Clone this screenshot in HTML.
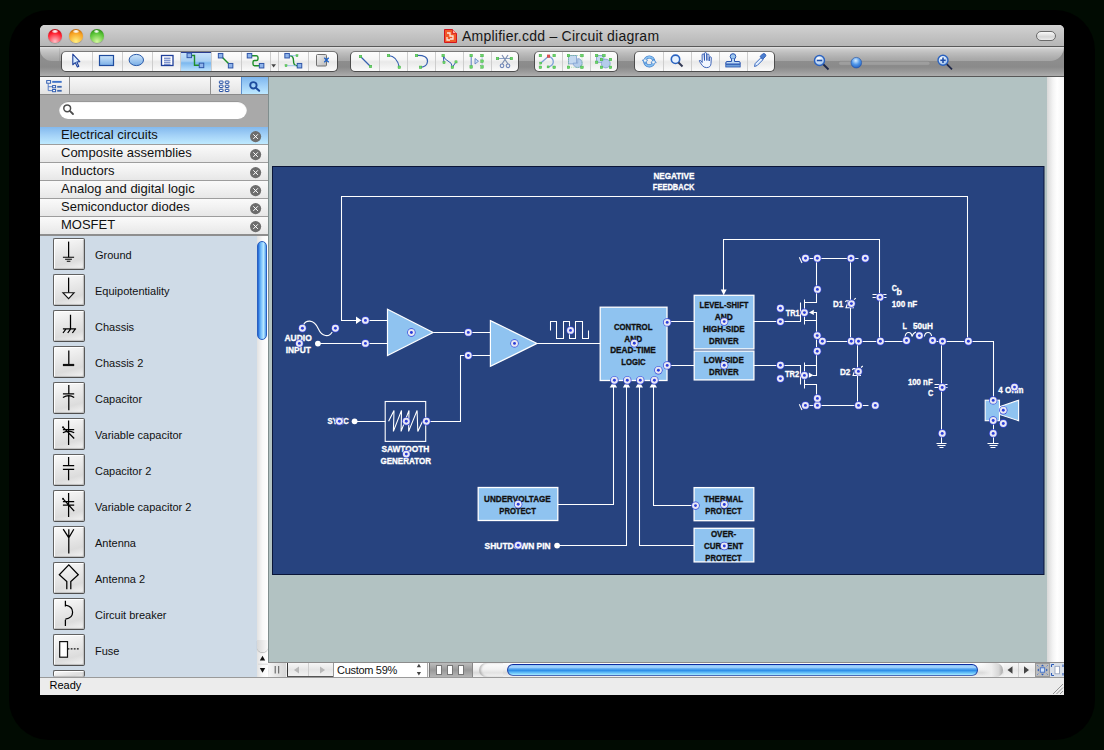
<!DOCTYPE html><html><head><meta charset="utf-8"><style>
*{box-sizing:border-box}
html,body{margin:0;padding:0}
body{width:1104px;height:750px;overflow:hidden;background:#010b02;position:relative;font-family:"Liberation Sans",sans-serif}
.a{position:absolute}
svg{position:absolute;overflow:visible}
#shadow{left:9px;top:10px;width:1086px;height:730px;background:#000;border-radius:40px}
#win{left:40px;top:25px;width:1024px;height:670px;background:#ececec;border-radius:5px 5px 0 0}
#title{left:40px;top:25px;width:1024px;height:22px;background:linear-gradient(#d2d2d2,#c6c6c6 40%,#b6b6b6);border-radius:5px 5px 0 0;border-bottom:1px solid #585858}
#tb{left:40px;top:47px;width:1024px;height:30px;background:linear-gradient(#8e8e8e 0px,#8d8d8d 14px,#8a8a8a 20px,#9c9c9c 25px,#adadad 29px);border-bottom:1px solid #575757}
.tl{width:14px;height:14px;border-radius:50%;top:29px}
.seg{top:51px;height:20.5px;border-radius:5px;background:linear-gradient(#fdfdfd 0,#f6f6f6 40%,#e9e9e9 52%,#f1f1f1 75%,#fbfbfb 100%);border:1px solid #4d4d4d;border-top-color:#7a7a7a}
.dv{top:52px;width:1px;height:18.5px;background:#cdcdcd}
#lp{left:40px;top:77px;width:228px;height:600px;background:#cfdbe7}
.row{left:40px;width:228px;height:18px;background:linear-gradient(#fafafa 0,#f2f2f2 45%,#e7e7e7 100%);border-bottom:1px solid #9d9d9d;font-size:13px;color:#111;padding-left:21px;line-height:16px;white-space:nowrap}
.row.sel{background:linear-gradient(#83b9ee 0,#a4d2f7 50%,#bfeaff 100%)}
.xb{width:11px;height:11px;border-radius:50%;background:#6c6c6c;left:250px}
#canvas{left:268px;top:77px;width:779px;height:585px;background:#b2c2c2;border-left:1px solid #7f8e8e}
#vsb{left:1047px;top:77px;width:17px;height:585px;background:linear-gradient(90deg,#d8d8d8,#f4f4f4 35%,#ffffff 60%,#f4f4f4)}
#status{left:40px;top:677px;width:1024px;height:18px;background:#ececec;border-top:1px solid #9a9a9a}
.item{left:53px;width:32px;height:32px;border:1px solid #616161;border-bottom:2px solid #4f4f4f;border-right-color:#575757;border-radius:2px;background:linear-gradient(165deg,#fbfbfb 0%,#e9e9e9 40%,#dcdcdc 72%,#f4f4f4 100%);box-shadow:inset 1px 1px 0 #fff, inset -1px -1px 1px #bdbdbd}
.lbl{left:95px;font-size:11px;color:#111;white-space:nowrap;line-height:12px}
</style></head><body>
<div id="shadow" class="a"></div>
<div id="win" class="a"></div>
<div id="title" class="a"></div>
<div class="a" style="left:48px;top:28.9px;width:14px;height:14px;border-radius:50%;background:radial-gradient(circle at 50% 88%,#ffc0c8 0,#ff1a2a 62%,#8a0a12 100%);box-shadow:0 0.5px 1px rgba(0,0,0,.3)"></div>
<div class="a" style="left:52.2px;top:29.7px;width:5.6px;height:3.4px;border-radius:50%;background:radial-gradient(ellipse at 50% 40%,rgba(255,255,255,1) 0,rgba(255,255,255,.7) 50%,rgba(255,255,255,0) 100%)"></div>
<div class="a" style="left:68.9px;top:28.9px;width:14px;height:14px;border-radius:50%;background:radial-gradient(circle at 50% 88%,#fff080 0,#f7a020 62%,#a04a00 100%);box-shadow:0 0.5px 1px rgba(0,0,0,.3)"></div>
<div class="a" style="left:73.10000000000001px;top:29.7px;width:5.6px;height:3.4px;border-radius:50%;background:radial-gradient(ellipse at 50% 40%,rgba(255,255,255,1) 0,rgba(255,255,255,.7) 50%,rgba(255,255,255,0) 100%)"></div>
<div class="a" style="left:89.7px;top:28.9px;width:14px;height:14px;border-radius:50%;background:radial-gradient(circle at 50% 88%,#d4f8a0 0,#52c030 62%,#1e6a10 100%);box-shadow:0 0.5px 1px rgba(0,0,0,.3)"></div>
<div class="a" style="left:93.9px;top:29.7px;width:5.6px;height:3.4px;border-radius:50%;background:radial-gradient(ellipse at 50% 40%,rgba(255,255,255,1) 0,rgba(255,255,255,.7) 50%,rgba(255,255,255,0) 100%)"></div>
<svg class="a" style="left:444px;top:29px" width="13" height="14" viewBox="0 0 13 14"><path d="M0.5 0.5H8.5L12.5 4.5V13.5H0.5Z" fill="#f05a28" stroke="#d4141e"/><path d="M8.5 0.5V4.5H12.5" fill="#ffb0a0" stroke="#d4141e" stroke-width="0.8"/><path d="M3 4H6V7H9V10H6M3 8V11H6" fill="none" stroke="#fff" stroke-width="1.3" opacity=".85"/></svg>
<div class="a" style="left:462px;top:28px;font-size:14px;letter-spacing:0.24px;color:#161616;white-space:nowrap;line-height:16px">Amplifier.cdd – Circuit diagram</div>
<div class="a" style="left:1036px;top:31px;width:20px;height:10px;border-radius:5px;border:1px solid #6a6a6a;background:linear-gradient(#fafafa,#d6d6d6 60%,#ececec)"></div>
<div id="tb" class="a"></div>
<div class="a" style="left:40px;top:47px;width:1024px;height:14px;border-radius:0 0 14px 12px;background:linear-gradient(#e4e4e4 0px,#cdcdcd 2px,#bdbdbd 6px,#adadad 11px,#a5a5a5 14px)"></div>
<div class="a" style="left:59.4px;top:48px;width:1px;height:13px;background:rgba(0,0,0,.08)"></div>
<div class="a seg" style="left:61px;width:277px"></div>
<div class="a dv" style="left:91.5px"></div>
<div class="a dv" style="left:121.5px"></div>
<div class="a dv" style="left:151.5px"></div>
<div class="a dv" style="left:180px"></div>
<div class="a dv" style="left:210.5px"></div>
<div class="a dv" style="left:240.5px"></div>
<div class="a dv" style="left:269.5px"></div>
<div class="a dv" style="left:277.5px"></div>
<div class="a dv" style="left:307.5px"></div>
<div class="a" style="left:180.5px;top:52px;width:30px;height:18.5px;background:linear-gradient(#c8e2fa 0,#a9d0f3 45%,#7cb8ee 55%,#bfe4ff 100%);border-top:1px solid #2a3c8f"></div>
<div class="a seg" style="left:350px;width:168.5px"></div>
<div class="a dv" style="left:378.5px"></div>
<div class="a dv" style="left:406.5px"></div>
<div class="a dv" style="left:434.5px"></div>
<div class="a dv" style="left:462.5px"></div>
<div class="a dv" style="left:490.5px"></div>
<div class="a seg" style="left:533.5px;width:84.5px"></div>
<div class="a dv" style="left:561.5px"></div>
<div class="a dv" style="left:589.5px"></div>
<div class="a seg" style="left:634px;width:140.5px"></div>
<div class="a dv" style="left:662.5px"></div>
<div class="a dv" style="left:690.5px"></div>
<div class="a dv" style="left:718.5px"></div>
<div class="a dv" style="left:746.5px"></div>
<svg class="a" style="left:0;top:0" width="1104" height="80" viewBox="0 0 1104 80"><path d="M72.8 54.2 L72.8 64.8 L75.2 62.6 L77.4 67 L78.8 66.2 L76.8 62 L79.8 61.6 Z" fill="#d8ecff" stroke="#1c3f9a" stroke-width="1.1" stroke-linejoin="round"/><defs><linearGradient id="gb" x1="0" y1="0" x2="0" y2="1"><stop offset="0" stop-color="#cfe6fb"/><stop offset="1" stop-color="#79aee6"/></linearGradient></defs><rect x="99.5" y="55.5" width="14" height="10" fill="url(#gb)" stroke="#1f4c9e" stroke-width="1.2"/><ellipse cx="136.3" cy="60" rx="7.2" ry="5.6" fill="url(#gb)" stroke="#2a5aa8" stroke-width="1"/><rect x="161.5" y="55.5" width="11.5" height="10" fill="#fff" stroke="#1f3f9a" stroke-width="1.3"/><rect x="164" y="57.7" width="6.5" height="1" fill="#4a68b8"/><rect x="164" y="59.7" width="6.5" height="1" fill="#4a68b8"/><rect x="164" y="61.7" width="6.5" height="1" fill="#4a68b8"/><rect x="164" y="63.7" width="6.5" height="1" fill="#4a68b8"/><path d="M191.5 55.5 H194.5 V65.3 H199" fill="none" stroke="#1f8f2a" stroke-width="1.4"/><rect x="187.05" y="53.15" width="4.5" height="4.5" fill="#8fb4ea" stroke="#2f56a8" stroke-width="1"/><rect x="199.25" y="63.150000000000006" width="4.5" height="4.5" fill="#8fb4ea" stroke="#2f56a8" stroke-width="1"/><line x1="221" y1="56" x2="230" y2="65" stroke="#1f8f2a" stroke-width="1.4"/><rect x="218.35" y="53.45" width="4.5" height="4.5" fill="#8fb4ea" stroke="#2f56a8" stroke-width="1"/><rect x="228.35" y="63.45" width="4.5" height="4.5" fill="#8fb4ea" stroke="#2f56a8" stroke-width="1"/><path d="M252 55.7 H256.5 Q258 55.7 258 57.5 V59 Q258 60.5 256.5 60.5 H254.5 Q253 60.5 253 62 V64 Q253 65.7 254.5 65.7 H259" fill="none" stroke="#1f8f2a" stroke-width="1.4"/><rect x="247.25" y="53.45" width="4.5" height="4.5" fill="#8fb4ea" stroke="#2f56a8" stroke-width="1"/><rect x="259.35" y="63.45" width="4.5" height="4.5" fill="#8fb4ea" stroke="#2f56a8" stroke-width="1"/><path d="M271.3 64.3 H276 L273.6 67.6 Z" fill="#444"/><path d="M290 55.7 Q293.5 55.7 293.5 60.7 Q293.5 65.7 297 65.7" fill="none" stroke="#1f8f2a" stroke-width="1.4"/><line x1="290" y1="55.7" x2="297" y2="55.7" stroke="#8ab4e8" stroke-width="0.8"/><line x1="287" y1="65.7" x2="296" y2="65.7" stroke="#8ab4e8" stroke-width="0.8"/><rect x="296.0" y="54.7" width="2" height="2" fill="#6ad66a" stroke="#3aa83a" stroke-width="0.4"/><rect x="285.0" y="64.7" width="2" height="2" fill="#6ad66a" stroke="#3aa83a" stroke-width="0.4"/><rect x="284.85" y="53.45" width="4.5" height="4.5" fill="#8fb4ea" stroke="#2f56a8" stroke-width="1"/><rect x="297.25" y="63.45" width="4.5" height="4.5" fill="#8fb4ea" stroke="#2f56a8" stroke-width="1"/><defs><linearGradient id="gg" x1="0" y1="0" x2="1" y2="1"><stop offset="0" stop-color="#f4f4f4"/><stop offset="1" stop-color="#b8b8b8"/></linearGradient></defs><rect x="316.5" y="54.5" width="10" height="11.5" rx="1" fill="url(#gg)" stroke="#707070" stroke-width="1"/><path d="M324.3 57.8 L328.7 62.2 M328.7 57.8 L324.3 62.2" stroke="#1a5fc8" stroke-width="1.3"/><line x1="360.5" y1="56.5" x2="370.5" y2="66.5" stroke="#3560b0" stroke-width="1.2"/><rect x="359.2" y="55.2" width="2.6" height="2.6" fill="#6ad66a" stroke="#3aa83a" stroke-width="0.4"/><rect x="369.2" y="65.2" width="2.6" height="2.6" fill="#6ad66a" stroke="#3aa83a" stroke-width="0.4"/><path d="M388.5 55.5 Q397 56 399.3 67.3" fill="none" stroke="#3560b0" stroke-width="1.2"/><rect x="387.2" y="54.2" width="2.6" height="2.6" fill="#6ad66a" stroke="#3aa83a" stroke-width="0.4"/><rect x="398.0" y="66.0" width="2.6" height="2.6" fill="#6ad66a" stroke="#3aa83a" stroke-width="0.4"/><path d="M416.5 55.5 Q428 55 427.5 61.5 Q427 67 420.5 67.3" fill="none" stroke="#3560b0" stroke-width="1.2"/><rect x="415.2" y="54.2" width="2.6" height="2.6" fill="#6ad66a" stroke="#3aa83a" stroke-width="0.4"/><rect x="419.2" y="66.0" width="2.6" height="2.6" fill="#6ad66a" stroke="#3aa83a" stroke-width="0.4"/><path d="M443.2 55.5 Q445 60 448 61 Q452 62.5 452.4 67.3 M444 62.6 L443.2 55.5 M452.4 67.3 L456 61.9" fill="none" stroke="#3560b0" stroke-width="1"/><rect x="441.9" y="54.2" width="2.6" height="2.6" fill="#6ad66a" stroke="#3aa83a" stroke-width="0.4"/><rect x="442.9" y="61.5" width="2.2" height="2.2" fill="#6ad66a" stroke="#3aa83a" stroke-width="0.4"/><rect x="451.09999999999997" y="66.0" width="2.6" height="2.6" fill="#6ad66a" stroke="#3aa83a" stroke-width="0.4"/><rect x="454.9" y="60.8" width="2.2" height="2.2" fill="#6ad66a" stroke="#3aa83a" stroke-width="0.4"/><line x1="471.2" y1="55.5" x2="471.2" y2="67" stroke="#5a7ec0" stroke-width="1"/><line x1="482.1" y1="55.5" x2="482.1" y2="67" stroke="#5a7ec0" stroke-width="0.8" stroke-dasharray="1 1"/><path d="M475 58.5 L478.5 61.2 L475 64 Z" fill="#cfe0f6" stroke="#5a7ec0" stroke-width="0.8"/><rect x="469.9" y="54.2" width="2.6" height="2.6" fill="#6ad66a" stroke="#3aa83a" stroke-width="0.4"/><rect x="469.9" y="65.7" width="2.6" height="2.6" fill="#6ad66a" stroke="#3aa83a" stroke-width="0.4"/><rect x="480.8" y="54.2" width="2.6" height="2.6" fill="#6ad66a" stroke="#3aa83a" stroke-width="0.4"/><rect x="480.8" y="59.900000000000006" width="2.6" height="2.6" fill="#6ad66a" stroke="#3aa83a" stroke-width="0.4"/><rect x="480.8" y="65.7" width="2.6" height="2.6" fill="#6ad66a" stroke="#3aa83a" stroke-width="0.4"/><line x1="497.5" y1="58.5" x2="511.4" y2="58.5" stroke="#8aa0c8" stroke-width="1"/><path d="M502 55 L508 64 M508 55 L502 64" stroke="#7d8fb0" stroke-width="1.2"/><circle cx="502" cy="65.8" r="1.8" fill="none" stroke="#6f86b8" stroke-width="1.1"/><circle cx="508" cy="65.8" r="1.8" fill="none" stroke="#6f86b8" stroke-width="1.1"/><rect x="496.2" y="57.2" width="2.6" height="2.6" fill="#6ad66a" stroke="#3aa83a" stroke-width="0.4"/><rect x="510.09999999999997" y="57.2" width="2.6" height="2.6" fill="#6ad66a" stroke="#3aa83a" stroke-width="0.4"/><path d="M540.8 63.1 L548.5 56.2 Q553.5 58.5 553.3 62 Q553 65.8 548.1 66.9" fill="none" stroke="#7ea2d8" stroke-width="1.3"/><rect x="539.1" y="54.2" width="2.6" height="2.6" fill="#6ad66a" stroke="#3aa83a" stroke-width="0.4"/><rect x="552.9000000000001" y="54.2" width="2.6" height="2.6" fill="#6ad66a" stroke="#3aa83a" stroke-width="0.4"/><rect x="539.1" y="66.0" width="2.6" height="2.6" fill="#6ad66a" stroke="#3aa83a" stroke-width="0.4"/><rect x="552.9000000000001" y="66.0" width="2.6" height="2.6" fill="#6ad66a" stroke="#3aa83a" stroke-width="0.4"/><rect x="539.8" y="62.1" width="2" height="2" fill="#6ad66a" stroke="#3aa83a" stroke-width="0.4"/><rect x="547.1" y="65.9" width="2" height="2" fill="#6ad66a" stroke="#3aa83a" stroke-width="0.4"/><rect x="547.2" y="54.9" width="2.7" height="2.7" fill="#e85050" stroke="#b02020" stroke-width="0.3"/><rect x="568.5" y="55.4" width="8.1" height="8.5" fill="#c4d8f0" stroke="#7f9fd0" stroke-width="0.8"/><path d="M577.7 63.1 V58.6 A4.5 4.5 0 1 1 573.2 63.1 Z" fill="#b4cceb" stroke="#7f9fd0" stroke-width="0.8"/><rect x="568.5" y="55.5" width="13.5" height="11.8" fill="none" stroke="#5ccc5c" stroke-width="0.6" stroke-dasharray="0.8 1.4"/><rect x="567.2" y="54.2" width="2.6" height="2.6" fill="#6ad66a" stroke="#3aa83a" stroke-width="0.4"/><rect x="580.7" y="54.2" width="2.6" height="2.6" fill="#6ad66a" stroke="#3aa83a" stroke-width="0.4"/><rect x="567.2" y="66.0" width="2.6" height="2.6" fill="#6ad66a" stroke="#3aa83a" stroke-width="0.4"/><rect x="580.7" y="66.0" width="2.6" height="2.6" fill="#6ad66a" stroke="#3aa83a" stroke-width="0.4"/><rect x="596.6" y="55.5" width="7.3" height="6.8" fill="#c4d8f0" stroke="#7f9fd0" stroke-width="0.8"/><circle cx="605.8" cy="63.5" r="4.4" fill="#b4cceb" stroke="#7f9fd0" stroke-width="0.8"/><rect x="595.3000000000001" y="54.2" width="2.6" height="2.6" fill="#6ad66a" stroke="#3aa83a" stroke-width="0.4"/><rect x="602.6" y="54.2" width="2.6" height="2.6" fill="#6ad66a" stroke="#3aa83a" stroke-width="0.4"/><rect x="595.3000000000001" y="61.0" width="2.6" height="2.6" fill="#6ad66a" stroke="#3aa83a" stroke-width="0.4"/><rect x="600.2" y="58.2" width="2.6" height="2.6" fill="#6ad66a" stroke="#3aa83a" stroke-width="0.4"/><rect x="609.2" y="58.2" width="2.6" height="2.6" fill="#6ad66a" stroke="#3aa83a" stroke-width="0.4"/><rect x="600.2" y="66.0" width="2.6" height="2.6" fill="#6ad66a" stroke="#3aa83a" stroke-width="0.4"/><rect x="609.2" y="66.0" width="2.6" height="2.6" fill="#6ad66a" stroke="#3aa83a" stroke-width="0.4"/><circle cx="649.3" cy="61.4" r="4.4" fill="none" stroke="#3c78c8" stroke-width="3.2"/><circle cx="649.3" cy="61.4" r="4.4" fill="none" stroke="#86c0f0" stroke-width="2"/><path d="M642.3 60 L645 63.8 L647.6 60 Z" fill="#86c0f0" stroke="#3c78c8" stroke-width="0.6"/><path d="M651 62.8 L653.6 59 L656.3 62.8 Z" fill="#86c0f0" stroke="#3c78c8" stroke-width="0.6"/><rect x="644" y="59.5" width="2.5" height="2" fill="#f4f4f4"/><rect x="652.2" y="61.3" width="2.5" height="2" fill="#f4f4f4"/><circle cx="675.5" cy="59.3" r="4.2" fill="#e6f2ff" stroke="#2a63c0" stroke-width="1.6"/><line x1="678.5" y1="62.5" x2="682.5" y2="66.5" stroke="#333a55" stroke-width="2"/><path d="M699.5 61.5 L702.3 65.5 Q703.8 67.6 706.5 67.6 Q710.8 67.6 711 63.5 L711.3 58 Q711.3 56.8 710.3 56.8 Q709.3 56.8 709.3 58 L709.2 61 L709 55.2 Q709 54 707.9 54 Q706.9 54 706.9 55.2 L706.9 60.5 L706.6 53.8 Q706.6 52.6 705.5 52.6 Q704.4 52.6 704.4 53.8 L704.5 60.5 L704.2 55 Q704.2 53.9 703.1 53.9 Q702.1 53.9 702.1 55 L702.2 62.5 L701 61 Q700 60 699.3 60.6 Q698.8 61.1 699.5 61.5 Z" fill="#f2f7ff" stroke="#2a55b0" stroke-width="0.9" stroke-linejoin="round"/><circle cx="733" cy="56.5" r="2.8" fill="#9cc6ee" stroke="#2a55b0" stroke-width="1"/><path d="M731.5 59 V61.5 H727 Q725.8 61.5 725.8 63 V64 H740.2 V63 Q740.2 61.5 739 61.5 H734.5 V59" fill="#bcd8f4" stroke="#2a55b0" stroke-width="1"/><rect x="725.8" y="64.5" width="14.4" height="2.5" fill="#6e9fd8" stroke="#2a55b0" stroke-width="0.8"/><path d="M754.5 66.5 L755.2 63.5 L761 57.7 L763 59.7 L757.2 65.5 Z" fill="#e2efff" stroke="#3a6ac0" stroke-width="1"/><path d="M760 56.5 L762.5 54 Q764 52.8 765.3 54.2 Q766.5 55.5 765.2 56.8 L762.8 59.2 Z" fill="#4a7ed0" stroke="#2a55b0" stroke-width="0.8"/><defs><radialGradient id="gz" cx="0.4" cy="0.3" r="0.8"><stop offset="0" stop-color="#ffffff"/><stop offset="1" stop-color="#8ab6ea"/></radialGradient><radialGradient id="gk" cx="0.45" cy="0.3" r="0.75"><stop offset="0" stop-color="#d9eeff"/><stop offset="0.5" stop-color="#4f97ea"/><stop offset="1" stop-color="#1f58b8"/></radialGradient></defs><line x1="823" y1="64" x2="828.5" y2="69.5" stroke="#1e2748" stroke-width="1.8"/><circle cx="819.5" cy="60.5" r="5" fill="url(#gz)" stroke="#2b62bf" stroke-width="1.4"/><line x1="816.8" y1="60.5" x2="822.2" y2="60.5" stroke="#1f4ea8" stroke-width="1.6"/><rect x="838.5" y="61.3" width="91.5" height="4" rx="2" fill="#9e9e9e" stroke="#878787" stroke-width="0.6"/><circle cx="856.3" cy="62.7" r="5.3" fill="url(#gk)" stroke="#2454a8" stroke-width="0.6"/><line x1="946.5" y1="63.8" x2="952" y2="69.3" stroke="#1e2748" stroke-width="1.8"/><circle cx="943" cy="60.3" r="5" fill="url(#gz)" stroke="#2b62bf" stroke-width="1.4"/><line x1="940.3" y1="60.3" x2="945.7" y2="60.3" stroke="#1f4ea8" stroke-width="1.6"/><line x1="943" y1="57.6" x2="943" y2="63" stroke="#1f4ea8" stroke-width="1.6"/></svg>
<div id="lp" class="a"></div>
<div class="a" style="left:40px;top:77px;width:228px;height:18px;background:linear-gradient(#f7f7f7,#ececec 60%,#e2e2e2);border-bottom:1px solid #8a8a8a"></div>
<div class="a" style="left:69px;top:77px;width:1px;height:17px;background:#8f8f8f"></div>
<div class="a" style="left:210px;top:77px;width:1px;height:17px;background:#8f8f8f"></div>
<div class="a" style="left:240.5px;top:77px;width:27.5px;height:17px;background:linear-gradient(#7db6ee,#a3d2f8 55%,#bde8ff);border-left:1px solid #5a8fd0"></div>
<svg class="a" style="left:0;top:0" width="300" height="100" viewBox="0 0 300 100"><path d="M48.2 83.5 V90.6 H52.2 M48.2 86.7 H52.2" fill="none" stroke="#4a74c4" stroke-width="0.9"/><rect x="46.7" y="80.6" width="3.9" height="2.6" fill="#fff" stroke="#2f5cb0" stroke-width="1"/><rect x="52.6" y="85.6" width="3" height="2.2" fill="#fff" stroke="#2f5cb0" stroke-width="1"/><rect x="52.6" y="89.5" width="3" height="2.2" fill="#fff" stroke="#2f5cb0" stroke-width="1"/><rect x="52.2" y="80.9" width="9.5" height="1.9" fill="#3f72c8"/><rect x="57.2" y="85.9" width="4.5" height="1.8" fill="#3f68b0"/><rect x="57.2" y="89.9" width="4.5" height="1.8" fill="#3f68b0"/><rect x="219.39999999999998" y="81.05" width="3.6" height="2.3" rx="0.4" fill="#fff" stroke="#1f4aa0" stroke-width="1"/><rect x="219.39999999999998" y="85.14999999999999" width="3.6" height="2.3" rx="0.4" fill="#fff" stroke="#1f4aa0" stroke-width="1"/><rect x="219.39999999999998" y="89.25" width="3.6" height="2.3" rx="0.4" fill="#fff" stroke="#1f4aa0" stroke-width="1"/><rect x="225.29999999999998" y="81.05" width="3.6" height="2.3" rx="0.4" fill="#fff" stroke="#1f4aa0" stroke-width="1"/><rect x="225.29999999999998" y="85.14999999999999" width="3.6" height="2.3" rx="0.4" fill="#fff" stroke="#1f4aa0" stroke-width="1"/><rect x="225.29999999999998" y="89.25" width="3.6" height="2.3" rx="0.4" fill="#fff" stroke="#1f4aa0" stroke-width="1"/><circle cx="253.4" cy="85.3" r="3.2" fill="none" stroke="#1e4b9e" stroke-width="1.9"/><line x1="255.8" y1="87.7" x2="259.2" y2="90.8" stroke="#1e4b9e" stroke-width="2" stroke-linecap="round"/></svg>
<div class="a" style="left:40px;top:95px;width:228px;height:32px;background:#a9a9a9"></div>
<div class="a" style="left:58.5px;top:100.5px;width:188px;height:18px;border-radius:9px;background:#fff;box-shadow:inset 0 1px 1px rgba(0,0,0,.45)"></div>
<svg class="a" style="left:0;top:0" width="100" height="130" viewBox="0 0 100 130"><circle cx="67.2" cy="108.3" r="3.4" fill="none" stroke="#4d4d4d" stroke-width="1.5"/><line x1="69.8" y1="110.9" x2="73" y2="114" stroke="#4d4d4d" stroke-width="1.8" stroke-linecap="round"/></svg>
<div class="a row sel" style="top:127px">Electrical circuits</div>
<svg class="a" style="left:249.8px;top:130.9px" width="11.2" height="11.2" viewBox="0 0 11.2 11.2"><circle cx="5.6" cy="5.6" r="5.6" fill="#6d6d6d"/><path d="M3.3 3.3 L7.9 7.9 M7.9 3.3 L3.3 7.9" stroke="#fff" stroke-width="1"/></svg>
<div class="a row" style="top:145px">Composite assemblies</div>
<svg class="a" style="left:249.8px;top:148.9px" width="11.2" height="11.2" viewBox="0 0 11.2 11.2"><circle cx="5.6" cy="5.6" r="5.6" fill="#6d6d6d"/><path d="M3.3 3.3 L7.9 7.9 M7.9 3.3 L3.3 7.9" stroke="#fff" stroke-width="1"/></svg>
<div class="a row" style="top:163px">Inductors</div>
<svg class="a" style="left:249.8px;top:166.9px" width="11.2" height="11.2" viewBox="0 0 11.2 11.2"><circle cx="5.6" cy="5.6" r="5.6" fill="#6d6d6d"/><path d="M3.3 3.3 L7.9 7.9 M7.9 3.3 L3.3 7.9" stroke="#fff" stroke-width="1"/></svg>
<div class="a row" style="top:181px">Analog and digital logic</div>
<svg class="a" style="left:249.8px;top:184.9px" width="11.2" height="11.2" viewBox="0 0 11.2 11.2"><circle cx="5.6" cy="5.6" r="5.6" fill="#6d6d6d"/><path d="M3.3 3.3 L7.9 7.9 M7.9 3.3 L3.3 7.9" stroke="#fff" stroke-width="1"/></svg>
<div class="a row" style="top:199px">Semiconductor diodes</div>
<svg class="a" style="left:249.8px;top:202.9px" width="11.2" height="11.2" viewBox="0 0 11.2 11.2"><circle cx="5.6" cy="5.6" r="5.6" fill="#6d6d6d"/><path d="M3.3 3.3 L7.9 7.9 M7.9 3.3 L3.3 7.9" stroke="#fff" stroke-width="1"/></svg>
<div class="a row" style="top:217px">MOSFET</div>
<svg class="a" style="left:249.8px;top:220.9px" width="11.2" height="11.2" viewBox="0 0 11.2 11.2"><circle cx="5.6" cy="5.6" r="5.6" fill="#6d6d6d"/><path d="M3.3 3.3 L7.9 7.9 M7.9 3.3 L3.3 7.9" stroke="#fff" stroke-width="1"/></svg>
<div class="a" style="left:40px;top:234px;width:228px;height:1.5px;background:#8e8e8e"></div>
<div class="a item" style="top:238.3px;height:32px;border-bottom-width:1px"></div>
<svg class="a" style="left:53px;top:238.3px" width="32" height="32" viewBox="0 0 32 32"><path d="M15.6 3.6V19.2" stroke="#000" stroke-width="1.25" fill="none"/><path d="M9.9 19.2H21.1M12.1 21.2H18.9M13.8 23.2H17.4" stroke="#000" stroke-width="1.05" fill="none"/></svg>
<div class="a lbl" style="top:249.0px">Ground</div>
<div class="a item" style="top:274.3px;height:32px;border-bottom-width:1px"></div>
<svg class="a" style="left:53px;top:274.3px" width="32" height="32" viewBox="0 0 32 32"><path d="M15.6 3.6V18.7" stroke="#000" stroke-width="1.25" fill="none"/><path d="M9.9 18.7H21.1L15.6 24.6Z" fill="#fff" stroke="#111" stroke-width="1.1"/></svg>
<div class="a lbl" style="top:285.0px">Equipotentiality</div>
<div class="a item" style="top:310.3px;height:32px;border-bottom-width:1px"></div>
<svg class="a" style="left:53px;top:310.3px" width="32" height="32" viewBox="0 0 32 32"><path d="M17.5 4.7V18.8M9.9 18.8H23.1M13 18.8L10 23M17.7 18.8L14.7 23M22.4 18.8L19.4 23" stroke="#000" stroke-width="1.25" fill="none"/></svg>
<div class="a lbl" style="top:321.0px">Chassis</div>
<div class="a item" style="top:346.3px;height:32px;border-bottom-width:1px"></div>
<svg class="a" style="left:53px;top:346.3px" width="32" height="32" viewBox="0 0 32 32"><path d="M15.8 4.4V19" stroke="#000" stroke-width="1.25" fill="none"/><path d="M9.9 19H21.2" stroke="#111" stroke-width="2.2"/></svg>
<div class="a lbl" style="top:357.0px">Chassis 2</div>
<div class="a item" style="top:382.3px;height:32px;border-bottom-width:1px"></div>
<svg class="a" style="left:53px;top:382.3px" width="32" height="32" viewBox="0 0 32 32"><path d="M15.8 3V11.8M9.9 11.8H21.2M9.9 15.6Q15.8 11.6 21.2 15.6M15.8 13.7V28.2" stroke="#000" stroke-width="1.25" fill="none"/></svg>
<div class="a lbl" style="top:393.0px">Capacitor</div>
<div class="a item" style="top:418.3px;height:32px;border-bottom-width:1px"></div>
<svg class="a" style="left:53px;top:418.3px" width="32" height="32" viewBox="0 0 32 32"><path d="M15.6 2.6V27.1M9.9 11.7H21.2M9.9 14.8Q15.6 11.4 21.2 14.8M9.9 9.1L21.2 20.5" stroke="#000" stroke-width="1.25" fill="none"/><circle cx="10" cy="9.2" r="1" fill="#111"/></svg>
<div class="a lbl" style="top:429.0px">Variable capacitor</div>
<div class="a item" style="top:454.3px;height:32px;border-bottom-width:1px"></div>
<svg class="a" style="left:53px;top:454.3px" width="32" height="32" viewBox="0 0 32 32"><path d="M15.6 2.9V11.6M9.9 11.6H21.2M9.9 15.3H21.2M15.6 15.3V26.3" stroke="#000" stroke-width="1.25" fill="none"/></svg>
<div class="a lbl" style="top:465.0px">Capacitor 2</div>
<div class="a item" style="top:490.3px;height:32px;border-bottom-width:1px"></div>
<svg class="a" style="left:53px;top:490.3px" width="32" height="32" viewBox="0 0 32 32"><path d="M15.6 3.1V26.9M9.9 11.6H21.2M9.9 15.2H21.2M9.9 8.6L21.2 21.1" stroke="#000" stroke-width="1.25" fill="none"/><circle cx="10" cy="8.7" r="1" fill="#111"/></svg>
<div class="a lbl" style="top:501.0px">Variable capacitor 2</div>
<div class="a item" style="top:526.3px;height:32px;border-bottom-width:1px"></div>
<svg class="a" style="left:53px;top:526.3px" width="32" height="32" viewBox="0 0 32 32"><path d="M15.8 11.7V27.6M10.2 3.2L15.8 11.7L20.8 3.2M15.8 3.2V11.7" stroke="#000" stroke-width="1.25" fill="none"/></svg>
<div class="a lbl" style="top:537.0px">Antenna</div>
<div class="a item" style="top:562.3px;height:32px;border-bottom-width:1px"></div>
<svg class="a" style="left:53px;top:562.3px" width="32" height="32" viewBox="0 0 32 32"><path d="M13.8 27.3V19.6L6.3 12.7L15.8 2.9L25.3 12.7L17.8 19.6V27.3" stroke="#000" stroke-width="1.25" fill="none"/></svg>
<div class="a lbl" style="top:573.0px">Antenna 2</div>
<div class="a item" style="top:598.3px;height:32px;border-bottom-width:1px"></div>
<svg class="a" style="left:53px;top:598.3px" width="32" height="32" viewBox="0 0 32 32"><path d="M12.4 2.8V8.6M12.4 7.2Q19.6 8.5 19.6 14.2Q19.6 20 12.4 21.1M12.4 21.8V28" stroke="#000" stroke-width="1.25" fill="none"/></svg>
<div class="a lbl" style="top:609.0px">Circuit breaker</div>
<div class="a item" style="top:634.3px;height:32px;border-bottom-width:1px"></div>
<svg class="a" style="left:53px;top:634.3px" width="32" height="32" viewBox="0 0 32 32"><rect x="6.7" y="7.6" width="7.8" height="15.6" fill="#fff" stroke="#111" stroke-width="1.2"/><path d="M14.6 14.9H26" stroke="#111" stroke-width="1.1" stroke-dasharray="1.8 1.3"/></svg>
<div class="a lbl" style="top:645.0px">Fuse</div>
<div class="a item" style="top:670.3px;height:6.7px;border-bottom-width:0px"></div>
<div class="a" style="left:257px;top:235.5px;width:11px;height:441.5px;background:linear-gradient(90deg,#e2e2e2,#f8f8f8 50%,#ffffff)"></div>
<div class="a" style="left:257.3px;top:240.9px;width:9.8px;height:99.4px;border-radius:5px;background:linear-gradient(90deg,#1e5fd0 0,#5aa8f4 25%,#8fd0ff 50%,#b8e8ff 70%,#4b98ea 100%);border:1px solid #2a5fbf"></div>
<div class="a" style="left:257px;top:640px;width:11px;height:12px;border-radius:0 0 6px 6px;background:linear-gradient(90deg,#d8d8d8,#fafafa);box-shadow:0 1px 1px rgba(0,0,0,.25)"></div>
<svg class="a" style="left:0;top:0" width="280" height="700" viewBox="0 0 280 700"><path d="M259.8 660.5H265.2L262.5 655.7Z" fill="#111"/><path d="M259.8 668H265.2L262.5 672.7Z" fill="#111"/><line x1="258" y1="664.2" x2="268" y2="664.2" stroke="#d0d0d0" stroke-width="0.8"/></svg>
<div class="a" style="left:268px;top:77px;width:1px;height:600px;background:#8a9898"></div>
<div id="canvas" class="a"></div>
<div id="vsb" class="a"></div>
<svg class="a" style="left:0;top:0;font-family:'Liberation Sans',sans-serif" width="1104" height="750" viewBox="0 0 1104 750"><rect x="272.5" y="166.5" width="771.5" height="408" fill="#27437f" stroke="#0a1538" stroke-width="1"/><path d="M967.5 341.5 V196.5 H341.5 V320.5 H356.5" stroke="#fff" stroke-width="1.05" fill="none"/><path d="M356 316.6 L361.3 320.3 L356 324 Z" fill="#fff"/><text x="653.4" y="178.50" textLength="41.1" lengthAdjust="spacingAndGlyphs" font-size="8.6" font-weight="bold" fill="#fff" stroke="#fff" stroke-width="0.3">NEGATIVE</text><text x="652.8" y="190.30" textLength="41.7" lengthAdjust="spacingAndGlyphs" font-size="8.6" font-weight="bold" fill="#fff" stroke="#fff" stroke-width="0.3">FEEDBACK</text><path d="M303.6 324.7 C305.5 320.5 313.5 318 318.3 328.7 C322 337 329 337.5 332.2 332" stroke="#fff" stroke-width="1.1" fill="none"/><text x="284.5" y="341.42" textLength="27.3" lengthAdjust="spacingAndGlyphs" font-size="8.4" font-weight="bold" fill="#fff" stroke="#fff" stroke-width="0.3">AUDIO</text><text x="285.7" y="353.12" textLength="25.1" lengthAdjust="spacingAndGlyphs" font-size="8.4" font-weight="bold" fill="#fff" stroke="#fff" stroke-width="0.3">INPUT</text><circle cx="317.9" cy="343.6" r="2.9" fill="#fff"/><path d="M317.5 343.5 H387.5" stroke="#fff" stroke-width="1.05" fill="none"/><path d="M360.5 320.5 H387.5" stroke="#fff" stroke-width="1.05" fill="none"/><path d="M387.5 309.3 L433.1 332.5 L387.5 355.5 Z" fill="#8fc3f0" stroke="#fff" stroke-width="1.2"/><path d="M433.5 332.5 H490.5" stroke="#fff" stroke-width="1.05" fill="none"/><path d="M490.5 355.5 H460.5 V421.5 H426.5" stroke="#fff" stroke-width="1.05" fill="none"/><path d="M490.4 320.6 L537 343.4 L490.4 366.4 Z" fill="#8fc3f0" stroke="#fff" stroke-width="1.2"/><path d="M536.5 343.5 H600.5" stroke="#fff" stroke-width="1.05" fill="none"/><path d="M550.5 330.5 V321.5 H556.5 V338.5 H563.5 V321.5 H569.5 V338.5 H575.5 V321.5 H582.5 V338.5 H588.5 V330.5" stroke="#fff" stroke-width="1.05" fill="none"/><rect x="385.2" y="401.5" width="40.5" height="39.9" fill="none" stroke="#fff" stroke-width="1.1"/><path d="M388.6 421.3 L394 410.4 L393.4 431.4 L401.5 410.4 L401.1 431.4 L409 410.4 L408.6 431.4 L417.1 410.4 L417.8 431.4 L422.6 421.3" stroke="#fff" stroke-width="1.1" fill="none"/><path d="M354.5 421.5 H385.5" stroke="#fff" stroke-width="1.05" fill="none"/><circle cx="354.6" cy="421.3" r="2.9" fill="#fff"/><text x="327.5" y="424.32" textLength="21.3" lengthAdjust="spacingAndGlyphs" font-size="8.4" font-weight="bold" fill="#fff" stroke="#fff" stroke-width="0.3">SYNC</text><text x="381.4" y="452.42" textLength="48.0" lengthAdjust="spacingAndGlyphs" font-size="8.4" font-weight="bold" fill="#fff" stroke="#fff" stroke-width="0.3">SAWTOOTH</text><text x="380.4" y="463.92" textLength="50.6" lengthAdjust="spacingAndGlyphs" font-size="8.4" font-weight="bold" fill="#fff" stroke="#fff" stroke-width="0.3">GENERATOR</text><rect x="600.2" y="307.2" width="66.8" height="73.3" fill="#8fc3f0" stroke="#fff" stroke-width="1.3"/><text x="613.9" y="330.15" textLength="38.5" lengthAdjust="spacingAndGlyphs" font-size="8.2" font-weight="bold" fill="#111" stroke="#111" stroke-width="0.3">CONTROL</text><text x="624.3" y="342.05" textLength="17.9" lengthAdjust="spacingAndGlyphs" font-size="8.2" font-weight="bold" fill="#111" stroke="#111" stroke-width="0.3">AND</text><text x="610.2" y="352.85" textLength="45.6" lengthAdjust="spacingAndGlyphs" font-size="8.2" font-weight="bold" fill="#111" stroke="#111" stroke-width="0.3">DEAD-TIME</text><text x="621.2" y="365.05" textLength="24.4" lengthAdjust="spacingAndGlyphs" font-size="8.2" font-weight="bold" fill="#111" stroke="#111" stroke-width="0.3">LOGIC</text><path d="M667.5 321.5 H694.5" stroke="#fff" stroke-width="1.05" fill="none"/><path d="M667.5 365.5 H694.5" stroke="#fff" stroke-width="1.05" fill="none"/><rect x="694.2" y="295.3" width="59.7" height="53.6" fill="#8fc3f0" stroke="#fff" stroke-width="1.3"/><rect x="694.2" y="351.1" width="59.7" height="28.8" fill="#8fc3f0" stroke="#fff" stroke-width="1.3"/><text x="699.5" y="308.15" textLength="49.0" lengthAdjust="spacingAndGlyphs" font-size="8.2" font-weight="bold" fill="#111" stroke="#111" stroke-width="0.3">LEVEL-SHIFT</text><text x="714.7" y="320.15" textLength="18.1" lengthAdjust="spacingAndGlyphs" font-size="8.2" font-weight="bold" fill="#111" stroke="#111" stroke-width="0.3">AND</text><text x="702.9" y="332.45" textLength="41.8" lengthAdjust="spacingAndGlyphs" font-size="8.2" font-weight="bold" fill="#111" stroke="#111" stroke-width="0.3">HIGH-SIDE</text><text x="709" y="344.25" textLength="29.7" lengthAdjust="spacingAndGlyphs" font-size="8.2" font-weight="bold" fill="#111" stroke="#111" stroke-width="0.3">DRIVER</text><text x="703.7" y="362.85" textLength="40.1" lengthAdjust="spacingAndGlyphs" font-size="8.2" font-weight="bold" fill="#111" stroke="#111" stroke-width="0.3">LOW-SIDE</text><text x="709" y="374.95" textLength="29.7" lengthAdjust="spacingAndGlyphs" font-size="8.2" font-weight="bold" fill="#111" stroke="#111" stroke-width="0.3">DRIVER</text><path d="M879.5 341.5 V239.5 H723.5 V290.5" stroke="#fff" stroke-width="1.05" fill="none"/><path d="M720.8 289.5 H726.6 L723.7 295.3 Z" fill="#fff"/><path d="M753.5 321.5 H800.5 V302.5" stroke="#fff" stroke-width="1.05" fill="none"/><path d="M800.5 320.5" stroke="#fff" stroke-width="1.05" fill="none"/><path d="M753.5 365.5 H800.5 V384.5" stroke="#fff" stroke-width="1.05" fill="none"/><path d="M804.5 299.5 V324.5" stroke="#fff" stroke-width="1.05" fill="none"/><path d="M816.5 258.5 V302.5 H804.5" stroke="#fff" stroke-width="1.05" fill="none"/><path d="M804.5 320.5 H816.5" stroke="#fff" stroke-width="1.05" fill="none"/><path d="M813.5 312.5 H816.5 V375.5 H812.5" stroke="#fff" stroke-width="1.05" fill="none"/><path d="M809 312.4 L813.8 309.8 V315 Z" fill="#fff"/><text x="785.7" y="316.47" textLength="13.9" lengthAdjust="spacingAndGlyphs" font-size="8.8" font-weight="bold" fill="#fff" stroke="#fff" stroke-width="0.3">TR1</text><path d="M804.5 362.5 V388.5" stroke="#fff" stroke-width="1.05" fill="none"/><path d="M804.5 365.5 H816.5" stroke="#fff" stroke-width="1.05" fill="none"/><path d="M804.5 384.5 H816.5 V405.5" stroke="#fff" stroke-width="1.05" fill="none"/><path d="M813.4 375.2 L808.8 372.6 V377.8 Z" fill="#fff"/><text x="785" y="377.37" textLength="14.2" lengthAdjust="spacingAndGlyphs" font-size="8.8" font-weight="bold" fill="#fff" stroke="#fff" stroke-width="0.3">TR2</text><path d="M816.5 258.5 H850.5" stroke="#fff" stroke-width="1.05" fill="none"/><path d="M854.5 258.5 H858.5" stroke="#fff" stroke-width="1.05" fill="none"/><path d="M816.5 405.5 H858.5" stroke="#fff" stroke-width="1.05" fill="none"/><path d="M862.5 405.5 H868.5" stroke="#fff" stroke-width="1.05" fill="none"/><path d="M850.5 258.5 V341.5" stroke="#fff" stroke-width="1.05" fill="none"/><path d="M857.5 341.5 V405.5" stroke="#fff" stroke-width="1.05" fill="none"/><path d="M822.5 341.5 H906.5" stroke="#fff" stroke-width="1.05" fill="none"/><path d="M932.5 341.5 H993.5 V400.5" stroke="#fff" stroke-width="1.05" fill="none"/><path d="M799.3 257.2 L802 263" stroke="#fff" stroke-width="1.1" fill="none"/><path d="M799.3 404.3 L802 410.1" stroke="#fff" stroke-width="1.1" fill="none"/><path d="M805.5 258.5 H816.5" stroke="#fff" stroke-width="1.05" fill="none"/><path d="M805.5 405.5 H816.5" stroke="#fff" stroke-width="1.05" fill="none"/><path d="M845.3 302 L846.3 300.8 H848.5 L846 307.7 H854 M854 299.7 L855.8 298.2" stroke="#fff" stroke-width="1.1" fill="none"/><text x="833" y="307.47" textLength="10.1" lengthAdjust="spacingAndGlyphs" font-size="8.8" font-weight="bold" fill="#fff" stroke="#fff" stroke-width="0.3">D1</text><path d="M852.3 369.8 L853.3 368.6 H855.5 L853 375.5 H861 M861 367.5 L862.8 366" stroke="#fff" stroke-width="1.1" fill="none"/><text x="839.9" y="375.47" textLength="10.3" lengthAdjust="spacingAndGlyphs" font-size="8.8" font-weight="bold" fill="#fff" stroke="#fff" stroke-width="0.3">D2</text><path d="M872.5 294.5 H886.5 M872.5 297.5 H886.5" stroke="#fff" stroke-width="1.05" fill="none"/><text x="891.7" y="291.30" textLength="5.1" lengthAdjust="spacingAndGlyphs" font-size="8.6" font-weight="bold" fill="#fff" stroke="#fff" stroke-width="0.3">C</text><text x="896.6" y="295.10" textLength="5.4" lengthAdjust="spacingAndGlyphs" font-size="8.6" font-weight="bold" fill="#fff" stroke="#fff" stroke-width="0.3">b</text><text x="891.7" y="307.20" textLength="25.6" lengthAdjust="spacingAndGlyphs" font-size="8.6" font-weight="bold" fill="#fff" stroke="#fff" stroke-width="0.3">100 nF</text><path d="M905.1 337 Q905.5 332.5 908.6 332.5 Q911.5 332.5 912 336.5 Q913 333 916 332 M924.4 336.5 Q925 332.5 928.1 332.5 Q931 332.5 931.6 336" stroke="#fff" stroke-width="1.1" fill="none"/><text x="902.6" y="328.50" textLength="4.4" lengthAdjust="spacingAndGlyphs" font-size="8.6" font-weight="bold" fill="#fff" stroke="#fff" stroke-width="0.3">L</text><text x="912.9" y="328.50" textLength="20.1" lengthAdjust="spacingAndGlyphs" font-size="8.6" font-weight="bold" fill="#fff" stroke="#fff" stroke-width="0.3">50uH</text><path d="M941.5 341.5 V443.5" stroke="#fff" stroke-width="1.05" fill="none"/><path d="M934.5 384.5 H947.5 M934.5 387.5 H947.5" stroke="#fff" stroke-width="1.05" fill="none"/><path d="M936.5 443.5 H946.5 M937.5 445.5 H945.5 M939.5 447.5 H943.5" stroke="#fff" stroke-width="1.05" fill="none"/><text x="907.9" y="384.50" textLength="24.8" lengthAdjust="spacingAndGlyphs" font-size="8.6" font-weight="bold" fill="#fff" stroke="#fff" stroke-width="0.3">100 nF</text><text x="927.9" y="395.70" textLength="5.3" lengthAdjust="spacingAndGlyphs" font-size="8.6" font-weight="bold" fill="#fff" stroke="#fff" stroke-width="0.3">C</text><rect x="985.2" y="400.2" width="14.3" height="20.5" fill="#8fc3f0" stroke="#fff" stroke-width="1.1"/><path d="M999.5 406.8 L1018.6 400.2 V420.7 L999.5 414.4 Z" fill="#8fc3f0" stroke="#fff" stroke-width="1.1"/><path d="M993.5 420.5 V443.5" stroke="#fff" stroke-width="1.05" fill="none"/><path d="M987.5 443.5 H998.5 M989.5 445.5 H997.5 M990.5 447.5 H995.5" stroke="#fff" stroke-width="1.05" fill="none"/><text x="998.3" y="392.80" textLength="25.3" lengthAdjust="spacingAndGlyphs" font-size="8.6" font-weight="bold" fill="#fff" stroke="#fff" stroke-width="0.3">4 Ohm</text><path d="M613.5 386.5 V504.5 H557.5" stroke="#fff" stroke-width="1.05" fill="none"/><path d="M626.5 386.5 V545.5 H557.5" stroke="#fff" stroke-width="1.05" fill="none"/><path d="M639.5 386.5 V545.5 H694.5" stroke="#fff" stroke-width="1.05" fill="none"/><path d="M653.5 386.5 V505.5 H695.5" stroke="#fff" stroke-width="1.05" fill="none"/><path d="M611.6999999999999 384.2 H615.1 L617.1 387.59999999999997 H609.6999999999999 Z" fill="#fff"/><path d="M624.8 384.2 H628.2 L630.2 387.59999999999997 H622.8 Z" fill="#fff"/><path d="M637.5999999999999 384.2 H641.0 L643.0 387.59999999999997 H635.5999999999999 Z" fill="#fff"/><path d="M651.5999999999999 384.2 H655.0 L657.0 387.59999999999997 H649.5999999999999 Z" fill="#fff"/><rect x="478.2" y="487.5" width="79.6" height="33" fill="#8fc3f0" stroke="#fff" stroke-width="1.3"/><rect x="694.1" y="487.6" width="59.7" height="33.1" fill="#8fc3f0" stroke="#fff" stroke-width="1.3"/><rect x="694.1" y="528.3" width="59.7" height="33.6" fill="#8fc3f0" stroke="#fff" stroke-width="1.3"/><text x="484.1" y="502.15" textLength="66.6" lengthAdjust="spacingAndGlyphs" font-size="8.2" font-weight="bold" fill="#111" stroke="#111" stroke-width="0.3">UNDERVOLTAGE</text><text x="499.3" y="514.05" textLength="36.5" lengthAdjust="spacingAndGlyphs" font-size="8.2" font-weight="bold" fill="#111" stroke="#111" stroke-width="0.3">PROTECT</text><text x="703.9" y="502.35" textLength="39.2" lengthAdjust="spacingAndGlyphs" font-size="8.2" font-weight="bold" fill="#111" stroke="#111" stroke-width="0.3">THERMAL</text><text x="705.3" y="513.85" textLength="36.4" lengthAdjust="spacingAndGlyphs" font-size="8.2" font-weight="bold" fill="#111" stroke="#111" stroke-width="0.3">PROTECT</text><text x="710.9" y="537.35" textLength="25.2" lengthAdjust="spacingAndGlyphs" font-size="8.2" font-weight="bold" fill="#111" stroke="#111" stroke-width="0.3">OVER-</text><text x="703.9" y="549.25" textLength="39.2" lengthAdjust="spacingAndGlyphs" font-size="8.2" font-weight="bold" fill="#111" stroke="#111" stroke-width="0.3">CURRENT</text><text x="705.3" y="561.15" textLength="36.4" lengthAdjust="spacingAndGlyphs" font-size="8.2" font-weight="bold" fill="#111" stroke="#111" stroke-width="0.3">PROTECT</text><text x="484.6" y="549.12" textLength="66.1" lengthAdjust="spacingAndGlyphs" font-size="8.4" font-weight="bold" fill="#fff" stroke="#fff" stroke-width="0.3">SHUTDOWN PIN</text><circle cx="557.1" cy="545.6" r="2.9" fill="#fff"/><circle cx="302.4" cy="328.3" r="4.15" fill="#3646dc"/><circle cx="302.4" cy="328.3" r="3.45" fill="#e8e8f2"/><circle cx="302.4" cy="328.3" r="1.45" fill="#2b3cd8"/><circle cx="335.4" cy="328.3" r="4.15" fill="#3646dc"/><circle cx="335.4" cy="328.3" r="3.45" fill="#e8e8f2"/><circle cx="335.4" cy="328.3" r="1.45" fill="#2b3cd8"/><circle cx="299.4" cy="343.4" r="4.15" fill="#3646dc"/><circle cx="299.4" cy="343.4" r="3.45" fill="#e8e8f2"/><circle cx="299.4" cy="343.4" r="1.45" fill="#2b3cd8"/><circle cx="365.4" cy="320.4" r="4.15" fill="#3646dc"/><circle cx="365.4" cy="320.4" r="3.45" fill="#e8e8f2"/><circle cx="365.4" cy="320.4" r="1.45" fill="#2b3cd8"/><circle cx="365.4" cy="343.4" r="4.15" fill="#3646dc"/><circle cx="365.4" cy="343.4" r="3.45" fill="#e8e8f2"/><circle cx="365.4" cy="343.4" r="1.45" fill="#2b3cd8"/><circle cx="411.4" cy="332.5" r="4.15" fill="#3646dc"/><circle cx="411.4" cy="332.5" r="3.45" fill="#e8e8f2"/><circle cx="411.4" cy="332.5" r="1.45" fill="#2b3cd8"/><circle cx="468.3" cy="332.4" r="4.15" fill="#3646dc"/><circle cx="468.3" cy="332.4" r="3.45" fill="#e8e8f2"/><circle cx="468.3" cy="332.4" r="1.45" fill="#2b3cd8"/><circle cx="468.3" cy="355.5" r="4.15" fill="#3646dc"/><circle cx="468.3" cy="355.5" r="3.45" fill="#e8e8f2"/><circle cx="468.3" cy="355.5" r="1.45" fill="#2b3cd8"/><circle cx="514.5" cy="343.4" r="4.15" fill="#3646dc"/><circle cx="514.5" cy="343.4" r="3.45" fill="#e8e8f2"/><circle cx="514.5" cy="343.4" r="1.45" fill="#2b3cd8"/><circle cx="570.5" cy="330.4" r="4.15" fill="#3646dc"/><circle cx="570.5" cy="330.4" r="3.45" fill="#e8e8f2"/><circle cx="570.5" cy="330.4" r="1.45" fill="#2b3cd8"/><circle cx="339.4" cy="421.3" r="4.15" fill="#3646dc"/><circle cx="339.4" cy="421.3" r="3.45" fill="#e8e8f2"/><circle cx="339.4" cy="421.3" r="1.45" fill="#2b3cd8"/><circle cx="406.3" cy="421.3" r="4.15" fill="#3646dc"/><circle cx="406.3" cy="421.3" r="3.45" fill="#e8e8f2"/><circle cx="406.3" cy="421.3" r="1.45" fill="#2b3cd8"/><circle cx="426.4" cy="421.3" r="4.15" fill="#3646dc"/><circle cx="426.4" cy="421.3" r="3.45" fill="#e8e8f2"/><circle cx="426.4" cy="421.3" r="1.45" fill="#2b3cd8"/><circle cx="406.3" cy="454.1" r="4.15" fill="#3646dc"/><circle cx="406.3" cy="454.1" r="3.45" fill="#e8e8f2"/><circle cx="406.3" cy="454.1" r="1.45" fill="#2b3cd8"/><circle cx="634.3" cy="343.3" r="4.15" fill="#3646dc"/><circle cx="634.3" cy="343.3" r="3.45" fill="#e8e8f2"/><circle cx="634.3" cy="343.3" r="1.45" fill="#2b3cd8"/><circle cx="667.2" cy="322.4" r="4.15" fill="#3646dc"/><circle cx="667.2" cy="322.4" r="3.45" fill="#e8e8f2"/><circle cx="667.2" cy="322.4" r="1.45" fill="#2b3cd8"/><circle cx="667.2" cy="365.4" r="4.15" fill="#3646dc"/><circle cx="667.2" cy="365.4" r="3.45" fill="#e8e8f2"/><circle cx="667.2" cy="365.4" r="1.45" fill="#2b3cd8"/><circle cx="658.4" cy="370.3" r="4.15" fill="#3646dc"/><circle cx="658.4" cy="370.3" r="3.45" fill="#e8e8f2"/><circle cx="658.4" cy="370.3" r="1.45" fill="#2b3cd8"/><circle cx="724.2" cy="321.6" r="4.15" fill="#3646dc"/><circle cx="724.2" cy="321.6" r="3.45" fill="#e8e8f2"/><circle cx="724.2" cy="321.6" r="1.45" fill="#2b3cd8"/><circle cx="724.2" cy="365.3" r="4.15" fill="#3646dc"/><circle cx="724.2" cy="365.3" r="3.45" fill="#e8e8f2"/><circle cx="724.2" cy="365.3" r="1.45" fill="#2b3cd8"/><circle cx="780.4" cy="321.6" r="4.15" fill="#3646dc"/><circle cx="780.4" cy="321.6" r="3.45" fill="#e8e8f2"/><circle cx="780.4" cy="321.6" r="1.45" fill="#2b3cd8"/><circle cx="780.4" cy="308.3" r="4.15" fill="#3646dc"/><circle cx="780.4" cy="308.3" r="3.45" fill="#e8e8f2"/><circle cx="780.4" cy="308.3" r="1.45" fill="#2b3cd8"/><circle cx="780.4" cy="365.3" r="4.15" fill="#3646dc"/><circle cx="780.4" cy="365.3" r="3.45" fill="#e8e8f2"/><circle cx="780.4" cy="365.3" r="1.45" fill="#2b3cd8"/><circle cx="780.4" cy="378.6" r="4.15" fill="#3646dc"/><circle cx="780.4" cy="378.6" r="3.45" fill="#e8e8f2"/><circle cx="780.4" cy="378.6" r="1.45" fill="#2b3cd8"/><circle cx="804.4" cy="312.6" r="4.15" fill="#3646dc"/><circle cx="804.4" cy="312.6" r="3.45" fill="#e8e8f2"/><circle cx="804.4" cy="312.6" r="1.45" fill="#2b3cd8"/><circle cx="804.4" cy="375.4" r="4.15" fill="#3646dc"/><circle cx="804.4" cy="375.4" r="3.45" fill="#e8e8f2"/><circle cx="804.4" cy="375.4" r="1.45" fill="#2b3cd8"/><circle cx="805.5" cy="258.3" r="4.15" fill="#3646dc"/><circle cx="805.5" cy="258.3" r="3.45" fill="#e8e8f2"/><circle cx="805.5" cy="258.3" r="1.45" fill="#2b3cd8"/><circle cx="817.3" cy="258.3" r="4.15" fill="#3646dc"/><circle cx="817.3" cy="258.3" r="3.45" fill="#e8e8f2"/><circle cx="817.3" cy="258.3" r="1.45" fill="#2b3cd8"/><circle cx="851" cy="258.3" r="4.15" fill="#3646dc"/><circle cx="851" cy="258.3" r="3.45" fill="#e8e8f2"/><circle cx="851" cy="258.3" r="1.45" fill="#2b3cd8"/><circle cx="865.3" cy="258.3" r="4.15" fill="#3646dc"/><circle cx="865.3" cy="258.3" r="3.45" fill="#e8e8f2"/><circle cx="865.3" cy="258.3" r="1.45" fill="#2b3cd8"/><circle cx="805.4" cy="405.4" r="4.15" fill="#3646dc"/><circle cx="805.4" cy="405.4" r="3.45" fill="#e8e8f2"/><circle cx="805.4" cy="405.4" r="1.45" fill="#2b3cd8"/><circle cx="817.4" cy="405.4" r="4.15" fill="#3646dc"/><circle cx="817.4" cy="405.4" r="3.45" fill="#e8e8f2"/><circle cx="817.4" cy="405.4" r="1.45" fill="#2b3cd8"/><circle cx="858.5" cy="405.4" r="4.15" fill="#3646dc"/><circle cx="858.5" cy="405.4" r="3.45" fill="#e8e8f2"/><circle cx="858.5" cy="405.4" r="1.45" fill="#2b3cd8"/><circle cx="875.3" cy="405.4" r="4.15" fill="#3646dc"/><circle cx="875.3" cy="405.4" r="3.45" fill="#e8e8f2"/><circle cx="875.3" cy="405.4" r="1.45" fill="#2b3cd8"/><circle cx="817.4" cy="289.4" r="4.15" fill="#3646dc"/><circle cx="817.4" cy="289.4" r="3.45" fill="#e8e8f2"/><circle cx="817.4" cy="289.4" r="1.45" fill="#2b3cd8"/><circle cx="817.2" cy="335.6" r="4.15" fill="#3646dc"/><circle cx="817.2" cy="335.6" r="3.45" fill="#e8e8f2"/><circle cx="817.2" cy="335.6" r="1.45" fill="#2b3cd8"/><circle cx="822.4" cy="341.3" r="4.15" fill="#3646dc"/><circle cx="822.4" cy="341.3" r="3.45" fill="#e8e8f2"/><circle cx="822.4" cy="341.3" r="1.45" fill="#2b3cd8"/><circle cx="817.2" cy="351.2" r="4.15" fill="#3646dc"/><circle cx="817.2" cy="351.2" r="3.45" fill="#e8e8f2"/><circle cx="817.2" cy="351.2" r="1.45" fill="#2b3cd8"/><circle cx="817.4" cy="398.4" r="4.15" fill="#3646dc"/><circle cx="817.4" cy="398.4" r="3.45" fill="#e8e8f2"/><circle cx="817.4" cy="398.4" r="1.45" fill="#2b3cd8"/><circle cx="851.3" cy="341.3" r="4.15" fill="#3646dc"/><circle cx="851.3" cy="341.3" r="3.45" fill="#e8e8f2"/><circle cx="851.3" cy="341.3" r="1.45" fill="#2b3cd8"/><circle cx="858.5" cy="341.3" r="4.15" fill="#3646dc"/><circle cx="858.5" cy="341.3" r="3.45" fill="#e8e8f2"/><circle cx="858.5" cy="341.3" r="1.45" fill="#2b3cd8"/><circle cx="880.4" cy="341.3" r="4.15" fill="#3646dc"/><circle cx="880.4" cy="341.3" r="3.45" fill="#e8e8f2"/><circle cx="880.4" cy="341.3" r="1.45" fill="#2b3cd8"/><circle cx="851.4" cy="303.6" r="4.15" fill="#3646dc"/><circle cx="851.4" cy="303.6" r="3.45" fill="#e8e8f2"/><circle cx="851.4" cy="303.6" r="1.45" fill="#2b3cd8"/><circle cx="858.4" cy="371.4" r="4.15" fill="#3646dc"/><circle cx="858.4" cy="371.4" r="3.45" fill="#e8e8f2"/><circle cx="858.4" cy="371.4" r="1.45" fill="#2b3cd8"/><circle cx="880" cy="297.2" r="4.15" fill="#3646dc"/><circle cx="880" cy="297.2" r="3.45" fill="#e8e8f2"/><circle cx="880" cy="297.2" r="1.45" fill="#2b3cd8"/><circle cx="906.5" cy="340.5" r="4.15" fill="#3646dc"/><circle cx="906.5" cy="340.5" r="3.45" fill="#e8e8f2"/><circle cx="906.5" cy="340.5" r="1.45" fill="#2b3cd8"/><circle cx="919.4" cy="335.6" r="4.15" fill="#3646dc"/><circle cx="919.4" cy="335.6" r="3.45" fill="#e8e8f2"/><circle cx="919.4" cy="335.6" r="1.45" fill="#2b3cd8"/><circle cx="932.6" cy="340.5" r="4.15" fill="#3646dc"/><circle cx="932.6" cy="340.5" r="3.45" fill="#e8e8f2"/><circle cx="932.6" cy="340.5" r="1.45" fill="#2b3cd8"/><circle cx="942.5" cy="341.3" r="4.15" fill="#3646dc"/><circle cx="942.5" cy="341.3" r="3.45" fill="#e8e8f2"/><circle cx="942.5" cy="341.3" r="1.45" fill="#2b3cd8"/><circle cx="968.4" cy="341.3" r="4.15" fill="#3646dc"/><circle cx="968.4" cy="341.3" r="3.45" fill="#e8e8f2"/><circle cx="968.4" cy="341.3" r="1.45" fill="#2b3cd8"/><circle cx="942.2" cy="387.5" r="4.15" fill="#3646dc"/><circle cx="942.2" cy="387.5" r="3.45" fill="#e8e8f2"/><circle cx="942.2" cy="387.5" r="1.45" fill="#2b3cd8"/><circle cx="942.2" cy="433.4" r="4.15" fill="#3646dc"/><circle cx="942.2" cy="433.4" r="3.45" fill="#e8e8f2"/><circle cx="942.2" cy="433.4" r="1.45" fill="#2b3cd8"/><circle cx="993.2" cy="400.4" r="4.15" fill="#3646dc"/><circle cx="993.2" cy="400.4" r="3.45" fill="#e8e8f2"/><circle cx="993.2" cy="400.4" r="1.45" fill="#2b3cd8"/><circle cx="1003.3" cy="410.3" r="4.15" fill="#3646dc"/><circle cx="1003.3" cy="410.3" r="3.45" fill="#e8e8f2"/><circle cx="1003.3" cy="410.3" r="1.45" fill="#2b3cd8"/><circle cx="993.2" cy="420.5" r="4.15" fill="#3646dc"/><circle cx="993.2" cy="420.5" r="3.45" fill="#e8e8f2"/><circle cx="993.2" cy="420.5" r="1.45" fill="#2b3cd8"/><circle cx="1003.3" cy="423.5" r="4.15" fill="#3646dc"/><circle cx="1003.3" cy="423.5" r="3.45" fill="#e8e8f2"/><circle cx="1003.3" cy="423.5" r="1.45" fill="#2b3cd8"/><circle cx="993.2" cy="433.4" r="4.15" fill="#3646dc"/><circle cx="993.2" cy="433.4" r="3.45" fill="#e8e8f2"/><circle cx="993.2" cy="433.4" r="1.45" fill="#2b3cd8"/><circle cx="1014.5" cy="387.1" r="4.15" fill="#3646dc"/><circle cx="1014.5" cy="387.1" r="3.45" fill="#e8e8f2"/><circle cx="1014.5" cy="387.1" r="1.45" fill="#2b3cd8"/><circle cx="614.4" cy="380.3" r="4.15" fill="#3646dc"/><circle cx="614.4" cy="380.3" r="3.45" fill="#e8e8f2"/><circle cx="614.4" cy="380.3" r="1.45" fill="#2b3cd8"/><circle cx="627.3" cy="380.3" r="4.15" fill="#3646dc"/><circle cx="627.3" cy="380.3" r="3.45" fill="#e8e8f2"/><circle cx="627.3" cy="380.3" r="1.45" fill="#2b3cd8"/><circle cx="640.3" cy="380.3" r="4.15" fill="#3646dc"/><circle cx="640.3" cy="380.3" r="3.45" fill="#e8e8f2"/><circle cx="640.3" cy="380.3" r="1.45" fill="#2b3cd8"/><circle cx="654.4" cy="380.3" r="4.15" fill="#3646dc"/><circle cx="654.4" cy="380.3" r="3.45" fill="#e8e8f2"/><circle cx="654.4" cy="380.3" r="1.45" fill="#2b3cd8"/><circle cx="518.2" cy="504.3" r="4.15" fill="#3646dc"/><circle cx="518.2" cy="504.3" r="3.45" fill="#e8e8f2"/><circle cx="518.2" cy="504.3" r="1.45" fill="#2b3cd8"/><circle cx="518.2" cy="545.2" r="4.15" fill="#3646dc"/><circle cx="518.2" cy="545.2" r="3.45" fill="#e8e8f2"/><circle cx="518.2" cy="545.2" r="1.45" fill="#2b3cd8"/><circle cx="695.5" cy="505.6" r="4.15" fill="#3646dc"/><circle cx="695.5" cy="505.6" r="3.45" fill="#e8e8f2"/><circle cx="695.5" cy="505.6" r="1.45" fill="#2b3cd8"/><circle cx="724.3" cy="504.5" r="4.15" fill="#3646dc"/><circle cx="724.3" cy="504.5" r="3.45" fill="#e8e8f2"/><circle cx="724.3" cy="504.5" r="1.45" fill="#2b3cd8"/><circle cx="724.3" cy="546" r="4.15" fill="#3646dc"/><circle cx="724.3" cy="546" r="3.45" fill="#e8e8f2"/><circle cx="724.3" cy="546" r="1.45" fill="#2b3cd8"/></svg>
<div class="a" style="left:268px;top:662px;width:796px;height:15px;background:linear-gradient(#fbfbfb,#ececec 50%,#e3e3e3 55%,#f2f2f2);border-top:1px solid #8c8c8c"></div>
<div class="a" style="left:269px;top:663px;width:17px;height:14px;background:linear-gradient(90deg,#f4f4f4,#d6d6d6)"></div>
<div class="a" style="left:286.5px;top:663px;width:46px;height:14px;border-left:1px solid #333;border-bottom:1px solid #555;background:linear-gradient(#f6f6f6,#e6e6e6 50%,#f1f1f1)"></div>
<div class="a" style="left:308.3px;top:663px;width:1px;height:13px;background:#cfcfcf"></div>
<div class="a" style="left:332.5px;top:662.5px;width:95px;height:14.5px;background:#fff;border-left:1px solid #999;border-right:1px solid #aaa"></div>
<div class="a" style="left:337px;top:663.5px;font-size:11px;color:#111;white-space:nowrap;line-height:13px;letter-spacing:-0.3px">Custom 59%</div>
<div class="a" style="left:428.5px;top:663px;width:44px;height:14px;background:linear-gradient(#bdbdbd,#999 50%,#b5b5b5);border-left:1px solid #777;border-right:1px solid #888"></div>
<div class="a" style="left:436px;top:665.3px;width:6px;height:9.5px;background:#fff;border:0.5px solid #777"></div>
<div class="a" style="left:447px;top:665.3px;width:6px;height:9.5px;background:#fff;border:0.5px solid #777"></div>
<div class="a" style="left:458px;top:665.3px;width:6px;height:9.5px;background:#fff;border:0.5px solid #777"></div>
<div class="a" style="left:473px;top:663px;width:531px;height:14px;border-radius:0 8px 8px 0;background:linear-gradient(#fdfdfd,#f0f0f0 45%,#dadada 70%,#f2f2f2)"></div>
<div class="a" style="left:479px;top:663px;width:24px;height:14px;border-radius:7px 0 0 7px;background:linear-gradient(#fdfdfd,#f2f2f2 45%,#e2e2e2 70%,#f6f6f6);box-shadow:inset 2px 0 2px rgba(0,0,0,.22)"></div>
<div class="a" style="left:506.5px;top:663.5px;width:471px;height:12.5px;border-radius:6.5px;background:linear-gradient(#8cc4f4 0,#a8d6ff 22%,#5aa8f0 38%,#2e8ee8 55%,#6cc6fa 80%,#a4e8ff 100%);border:1px solid #1f3fa6;border-top-color:#0a2aa0;border-bottom-color:#4a6ab8"></div>
<div class="a" style="left:1003.5px;top:663px;width:31.5px;height:14px;background:linear-gradient(#f8f8f8,#e8e8e8 50%,#f4f4f4)"></div>
<div class="a" style="left:1018.2px;top:663px;width:1px;height:14px;background:#d0d0d0"></div>
<div class="a" style="left:982px;top:663px;width:21px;height:14px;border-radius:0 8px 8px 0;background:linear-gradient(90deg,rgba(240,240,240,0) 0,#eeeeee 45%,#d6d6d6 80%,#a9a9a9 100%)"></div>
<div class="a" style="left:1035px;top:663px;width:15px;height:14px;background:#bcbcbc;border:1px solid #9a9a9a"></div>
<div class="a" style="left:1050px;top:663px;width:14px;height:14px;background:#d9dfe8"></div>
<svg class="a" style="left:0;top:0" width="1104" height="750" viewBox="0 0 1104 750"><path d="M275.2 666 V673.5 M278.7 666 V673.5" stroke="#555" stroke-width="1"/><path d="M294 670 L299 666.5 V673.5 Z" fill="#b8b8b8"/><path d="M325 670 L320 666.5 V673.5 Z" fill="#b8b8b8"/><path d="M416.8 667.2 H421 L418.9 663.8 Z M416.8 672 H421 L418.9 675.4 Z" fill="#444"/><path d="M1007.5 670 L1012.5 666.3 V673.7 Z M1029 670 L1024 666.3 V673.7 Z" fill="#444"/><rect x="1040.3" y="667.8" width="4.4" height="4.4" fill="#d4e4f6" stroke="#3a6ac8" stroke-width="0.9"/><path d="M1042.5 664.6 L1040.9 666.3 H1044.1 Z M1042.5 675.4 L1040.9 673.7 H1044.1Z M1037.2 670 L1038.9 668.4 V671.6Z M1047.8 670 L1046.1 668.4 V671.6Z" fill="#2a5ab8"/><path d="M1037 665 L1038.5 666.5 M1048 665 L1046.5 666.5 M1037 675 L1038.5 673.5 M1048 675 L1046.5 673.5" stroke="#5a80c8" stroke-width="0.8"/><rect x="1055" y="666.3" width="4.5" height="7.5" fill="#fff" stroke="#8a9ab8" stroke-width="0.8"/><path d="M1051.5 664.5 V667 M1051.5 673 V675.5 M1051.5 675.5 H1054 M1051.5 664.5 H1054 M1063 664.5 V667 M1063 673 V675.5" stroke="#2a5ab8" stroke-width="1.1"/></svg>
<div id="status" class="a"></div>
<div class="a" style="left:49.5px;top:679px;font-size:11px;color:#000;white-space:nowrap;line-height:13px">Ready</div>
<svg class="a" style="left:0;top:0" width="1104" height="750" viewBox="0 0 1104 750"><path d="M1053 694 L1063 684 M1056.5 694 L1063 687.5 M1060 694 L1063 691" stroke="#8a8a8a" stroke-width="0.9"/></svg>
</body></html>
